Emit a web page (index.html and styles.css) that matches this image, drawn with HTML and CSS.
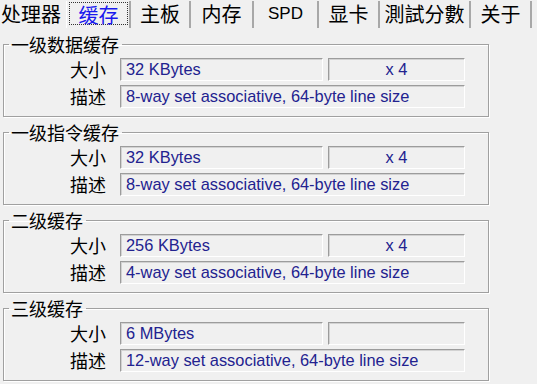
FILE: index.html
```html
<!DOCTYPE html>
<html lang="zh">
<head>
<meta charset="utf-8">
<title>CPU-Z 缓存</title>
<link rel="stylesheet" href="styles.css">
</head>
<body>
<div class="tabs">
  <div class="tab t1">处理器</div>
  <div class="tab t2 active"><span class="focus">缓存</span></div>
  <div class="tab t3">主板</div>
  <div class="tab t4">内存</div>
  <div class="tab t5 latin">SPD</div>
  <div class="tab t6">显卡</div>
  <div class="tab t7">測試分數</div>
  <div class="tab t8">关于</div>
</div>
<div class="groups">
  <fieldset class="group">
    <legend>一级数据缓存</legend>
    <div class="row"><span class="label">大小</span><span class="field f-size">32 KBytes</span><span class="field f-count">x 4</span></div>
    <div class="row"><span class="label">描述</span><span class="field f-desc">8-way set associative, 64-byte line size</span></div>
  </fieldset>
  <fieldset class="group">
    <legend>一级指令缓存</legend>
    <div class="row"><span class="label">大小</span><span class="field f-size">32 KBytes</span><span class="field f-count">x 4</span></div>
    <div class="row"><span class="label">描述</span><span class="field f-desc">8-way set associative, 64-byte line size</span></div>
  </fieldset>
  <fieldset class="group">
    <legend>二级缓存</legend>
    <div class="row"><span class="label">大小</span><span class="field f-size">256 KBytes</span><span class="field f-count">x 4</span></div>
    <div class="row"><span class="label">描述</span><span class="field f-desc">4-way set associative, 64-byte line size</span></div>
  </fieldset>
  <fieldset class="group">
    <legend>三级缓存</legend>
    <div class="row"><span class="label">大小</span><span class="field f-size">6 MBytes</span><span class="field f-count"></span></div>
    <div class="row"><span class="label">描述</span><span class="field f-desc">12-way set associative, 64-byte line size</span></div>
  </fieldset>
</div>
</body>
</html>
```
FILE: styles.css
```css
html, body {
  margin: 0;
  padding: 0;
  background: #f0f0f0;
}
body {
  width: 537px;
  height: 384px;
  overflow: hidden;
  font-family: "Noto Sans CJK SC", "Liberation Sans", sans-serif;
  color: #000;
}
.tabs {
  display: flex;
  height: 30px;
  align-items: flex-start;
}
.tab {
  box-sizing: border-box;
  height: 27px;
  margin-top: 1px;
  font-size: 20px;
  line-height: 25px;
  text-align: center;
  border-right: 2px solid #a8a8a8;
  white-space: nowrap;
}
.t1 { width: 66px; border-right: none; text-align: left; padding-left: 1px; }
.t2 { width: 65px; padding: 1px 1px 0 2px; border-left: 1px solid #fff; }
.t3 { width: 60px; }
.t4 { width: 63px; }
.t5 { width: 65px; }
.t6 { width: 61px; }
.t7 { width: 91px; }
.t8 { width: 61px; }
.latin { font-family: "Liberation Sans", sans-serif; font-size: 17px; }
.active { color: #1a1aee; }
.focus {
  display: block;
  height: 23px;
  line-height: 23px;
  border: 1px dotted #333;
  box-sizing: border-box;
}
.groups {
  padding: 4px 0 0 3px;
  display: flex;
  flex-direction: column;
  gap: 5px;
}
.group {
  width: 486px;
  box-sizing: border-box;
  margin: 0;
  padding: 4px 0 8px 0;
  border: 1px solid #a0a0a0;
  box-shadow: 1px 1px 0 #fff, inset 1px 1px 0 #fff;
  min-width: 0;
}
.group legend {
  font-size: 18px;
  line-height: 20px;
  height: 20px;
  padding: 0 3px 0 2px;
  margin-left: 5px;
}
.row {
  display: flex;
  align-items: center;
  height: 23px;
}
.row + .row {
  margin-top: 4px;
}
.label {
  width: 102px;
  margin-right: 14px;
  text-align: right;
  font-size: 18px;
  line-height: 23px;
}
.field {
  box-sizing: border-box;
  height: 23px;
  border-top: 1px solid #9c9c9c;
  border-left: 1px solid #9c9c9c;
  border-right: 1px solid #fff;
  border-bottom: 1px solid #fff;
  box-shadow: inset 1px 1px 0 #d2d2d2;
  font-family: "Liberation Sans", sans-serif;
  font-size: 16.4px;
  line-height: 21px;
  color: #22228f;
  padding-left: 5px;
  white-space: nowrap;
  overflow: hidden;
}
.f-size { width: 203px; }
.f-count { width: 137px; margin-left: 5px; text-align: center; padding-left: 0; }
.f-desc { width: 345px; }
```
